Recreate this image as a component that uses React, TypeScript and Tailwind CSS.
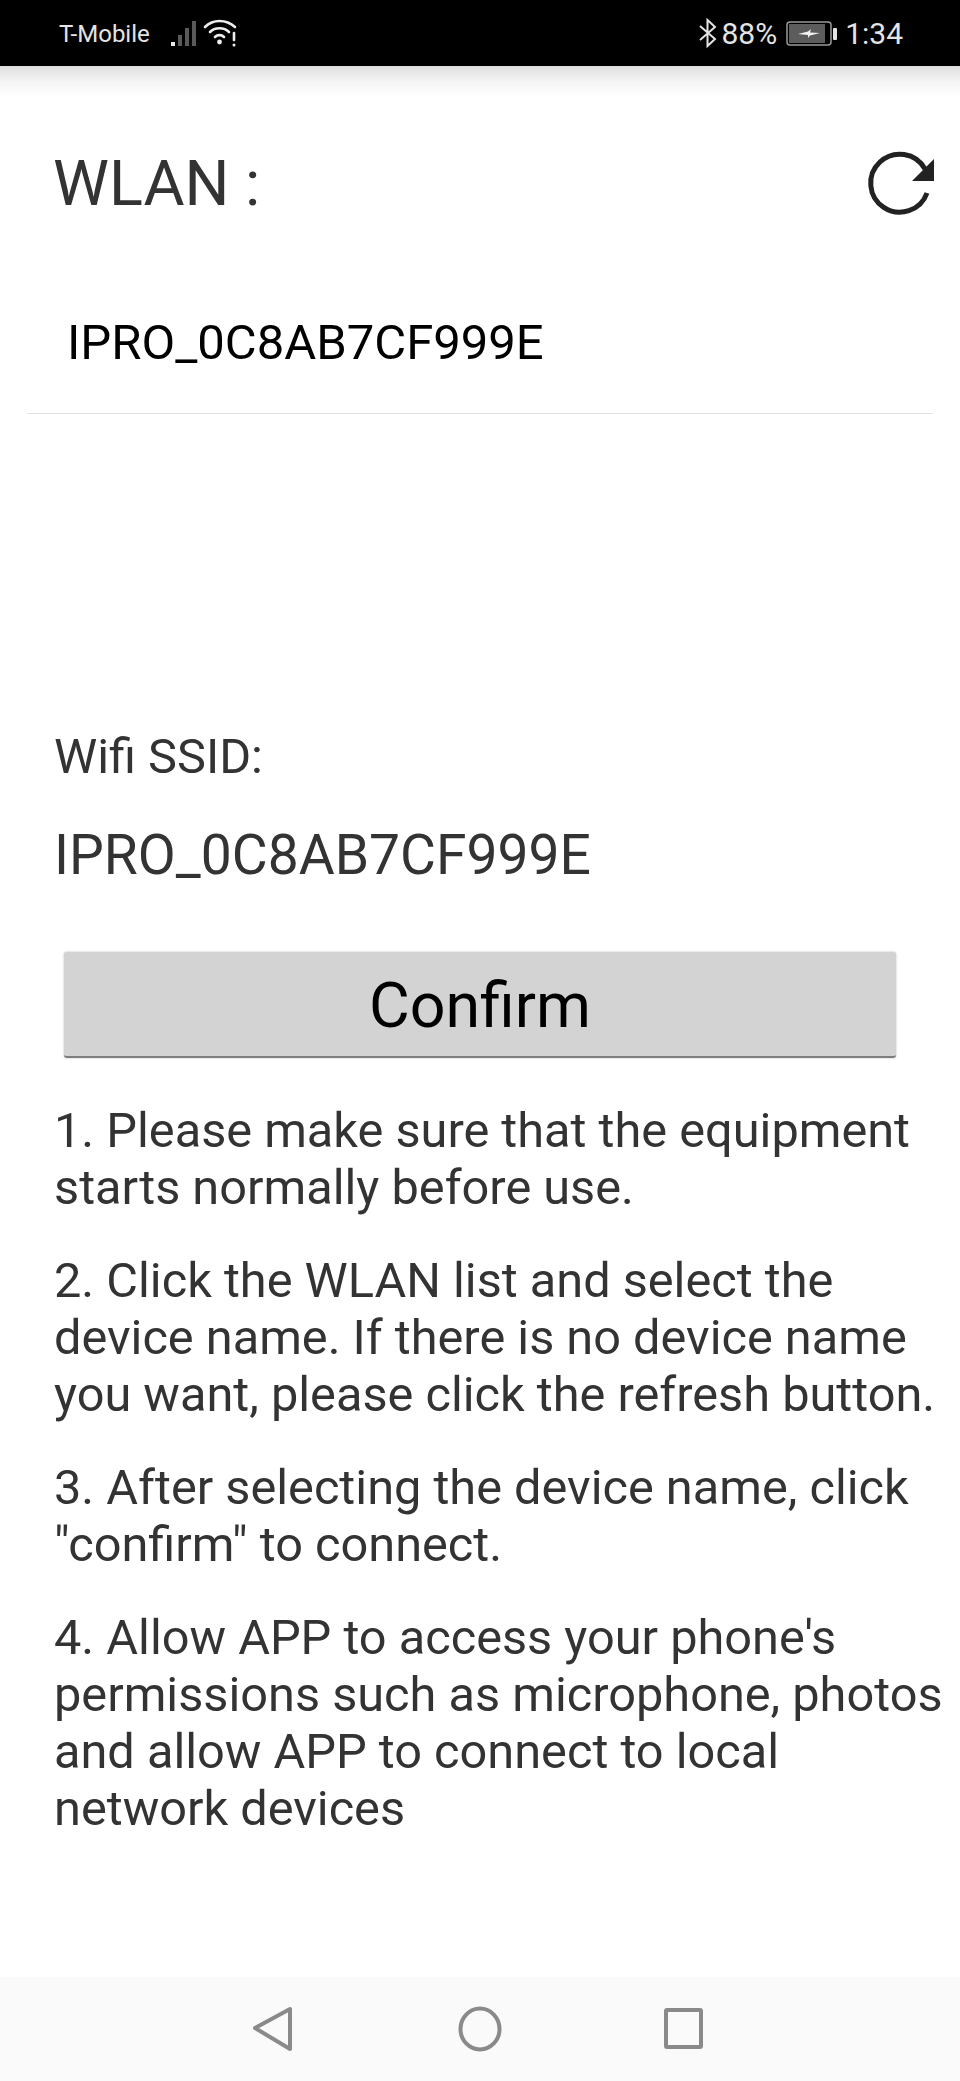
const roboto = { fontFamily: 'Roboto, sans-serif' }

function StatusBar() {
  return (
    <div className="h-[66px] bg-black flex items-center justify-between pl-[59px] pr-[57px] text-[#e4e4e4]">
      <div className="flex items-center">
        <span className="text-[24px] leading-none pt-[2px]">T-Mobile</span>
        <svg width="30" height="30" viewBox="0 0 30 30" className="ml-[20px]">
          <rect x="1" y="24" width="4" height="4" fill="#e8e8e8" />
          <rect x="8" y="17" width="4" height="11" fill="#5a5a5a" />
          <rect x="15" y="10" width="4" height="18" fill="#5a5a5a" />
          <rect x="22" y="3" width="4" height="25" fill="#5a5a5a" />
        </svg>
        <svg width="34" height="30" viewBox="0 0 34 30" className="ml-[3px]" fill="none" stroke="#eee" strokeWidth="2.6" strokeLinecap="round">
          <path d="M2 9 C10 1 23 1 32 9" />
          <path d="M7 14 C12 9 21 9 26 14" />
          <path d="M12 19 C14.500 16.500 18.500 16.500 21 19" />
          <circle cx="16.500" cy="24" r="2.400" fill="#eee" stroke="none" />
          <path d="M31 15 V22" />
          <circle cx="31" cy="27" r="1.500" fill="#eee" stroke="none" />
        </svg>
      </div>
      <div className="flex items-center">
        <svg width="20" height="30" viewBox="0 0 20 30" fill="none" stroke="#e4e4e4" strokeWidth="2">
          <path d="M2 8 L17 21 L9.500 28 V2 L17 9 L2 22" />
        </svg>
        <span className="text-[30px] leading-none ml-[3px] pt-[1px]">88%</span>
        <svg width="52" height="28" viewBox="0 0 52 28" className="ml-[9px]">
          <rect x="1" y="3" width="44" height="23" rx="3" fill="none" stroke="#9a9a9a" strokeWidth="1.500" />
          <rect x="3" y="5" width="36" height="19" fill="#5c5c5c" />
          <rect x="47" y="9" width="4" height="12" rx="1" fill="#e4e4e4" />
          <path d="M12 15 L22 12.500 L25 10 L24 13.500 L34 14 L24 16.500 L22 19 L22 16 Z" fill="#f2f2f2" />
        </svg>
        <span className="text-[30px] leading-none ml-[7px] pt-[1px]">1:34</span>
      </div>
    </div>
  )
}

export default function App() {
  return (
    <div className="w-[960px] h-[2081px] bg-white flex flex-col text-[#333333]" style={roboto}>
      <StatusBar />
      <div className="h-[32px] -mb-[32px] bg-gradient-to-b from-[#dedede] via-[#f5f5f5] to-white" />

      <div className="flex-1 flex flex-col">
        <div className="flex items-center justify-between pl-[53px] pr-[24px] pt-[82px]">
          <span className="text-[63px] leading-[72px]">WLAN :</span>
          <svg width="72" height="70" viewBox="0 0 72 70" fill="none">
            <path d="M63 44 A29 29 0 1 1 61 20" stroke="#222" strokeWidth="5" />
            <path d="M70 10 V32 H48 Z" fill="#222" />
          </svg>
        </div>

        <div className="mx-[27px] mt-[75px] h-[119px] border-b border-[#e2e2e2] pl-[40px] text-black text-[49px] leading-[96px]">
          IPRO_0C8AB7CF999E
        </div>

        <div className="mt-[315px] px-[54px] text-[48.700px] leading-[56px]">Wifi SSID:</div>
        <div className="mt-[40px] px-[54px] text-[55.200px] leading-[60px]">IPRO_0C8AB7CF999E</div>

        <button className="mx-[64px] mt-[67px] h-[106px] pt-[5px] bg-[#d3d3d3] rounded-[3px] border-b-2 border-[#7d7d7d] shadow-[0_0_2px_rgba(0,0,0,0.3)] text-black text-[62.700px] leading-none">
          Confirm
        </button>

        <div className="mt-[44px] pl-[54px] pr-[4px] text-[48.700px] leading-[57px] flex flex-col gap-[36px]">
          <p>1. Please make sure that the equipment<br />starts normally before use.</p>
          <p>2. Click the WLAN list and select the<br />device name. If there is no device name<br />you want, please click the refresh button.</p>
          <p>3. After selecting the device name, click<br />"confirm" to connect.</p>
          <p>4. Allow APP to access your phone's<br />permissions such as microphone, photos<br />and allow APP to connect to local<br />network devices</p>
        </div>
      </div>

      <div className="h-[104px] bg-[#fafafa] flex items-center justify-between pl-[252px] pr-[256px]">
        <svg width="42" height="46" viewBox="0 0 42 46" fill="none" stroke="#8a8a8a" strokeWidth="4" strokeLinejoin="round">
          <path d="M38 3 V43 L3 22 Z" />
        </svg>
        <svg width="44" height="46" viewBox="0 0 44 46" fill="none" stroke="#8a8a8a" strokeWidth="4" className="translate-x-[1px]">
          <ellipse cx="22" cy="23" rx="19.500" ry="20.500" />
        </svg>
        <svg width="40" height="42" viewBox="0 0 40 42" fill="none" stroke="#8a8a8a" strokeWidth="4" strokeLinejoin="round">
          <rect x="2" y="2" width="35" height="37" rx="1" />
        </svg>
      </div>
    </div>
  )
}
